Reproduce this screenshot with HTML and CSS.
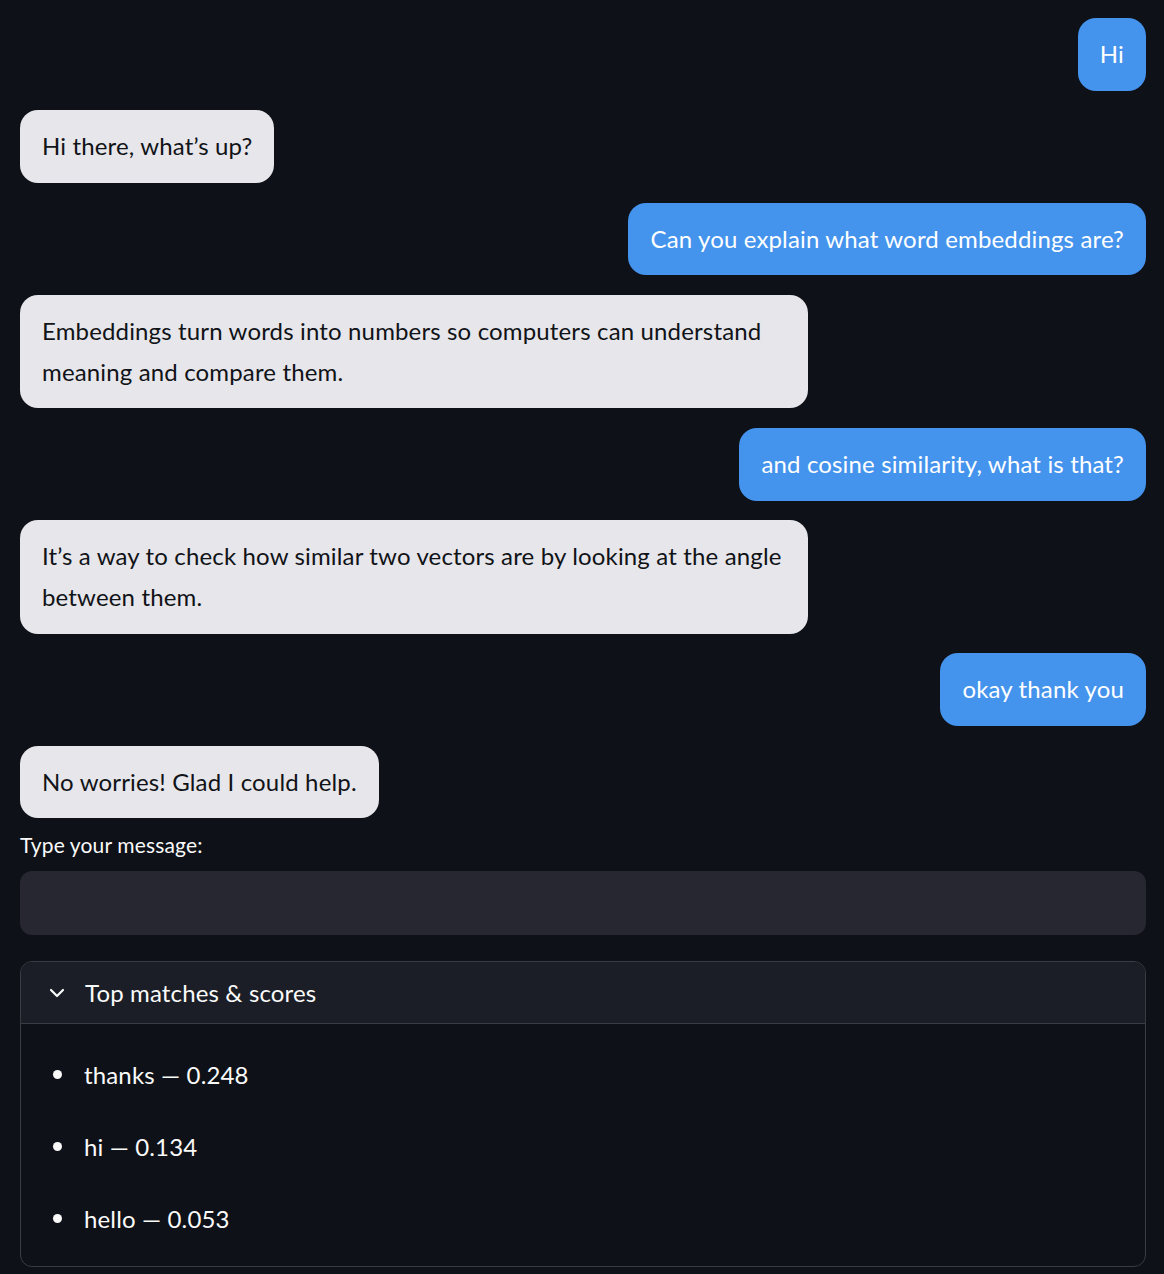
FILE: index.html
```html
<!DOCTYPE html>
<html lang="en">
<head>
<meta charset="utf-8">
<title>Chat</title>
<link rel="stylesheet" href="styles.css">
</head>
<body>
<main class="app">
  <section class="chat">
    <div class="bubble user">Hi</div>
    <div class="bubble bot">Hi there, what’s up?</div>
    <div class="bubble user">Can you explain what word embeddings are?</div>
    <div class="bubble bot">Embeddings turn words into numbers so computers can understand meaning and compare them.</div>
    <div class="bubble user">and cosine similarity, what is that?</div>
    <div class="bubble bot">It’s a way to check how similar two vectors are by looking at the angle between them.</div>
    <div class="bubble user">okay thank you</div>
    <div class="bubble bot">No worries! Glad I could help.</div>
  </section>

  <label class="label" for="msg">Type your message:</label>
  <input class="input" id="msg" type="text">

  <section class="expander">
    <div class="exp-header">
      <svg class="chev" width="16" height="10" viewBox="0 0 16 10"><path d="M2 2 L8 8 L14 2" fill="none" stroke="#fafafa" stroke-width="2.2" stroke-linecap="round" stroke-linejoin="round"/></svg>
      <span class="exp-title">Top matches &amp; scores</span>
    </div>
    <ul class="matches">
      <li>thanks — 0.248</li>
      <li>hi — 0.134</li>
      <li>hello — 0.053</li>
    </ul>
  </section>
</main>
</body>
</html>
```

FILE: styles.css
```css
html, body {
  margin: 0;
  padding: 0;
  background: #0e1117;
}

body {
  font-family: Lato, "Noto Sans", "Liberation Sans", sans-serif;
  color: #fafafa;
  letter-spacing: 0.15px;
}

.app {
  padding: 18px 18px 0 20px;
  display: flex;
  flex-direction: column;
}

.chat {
  display: flex;
  flex-direction: column;
  gap: 19.5px;
}

.bubble {
  max-width: 70%;
  box-sizing: border-box;
  padding: 16px 22px;
  font-size: 24px;
  line-height: 40.8px;
  border-radius: 18px;
}

.user {
  align-self: flex-end;
  background: #4493ed;
  color: #ffffff;
}

.bot {
  align-self: flex-start;
  background: #e6e6eb;
  color: #111317;
}

.label {
  margin-top: 12px;
  font-size: 21px;
  line-height: 30px;
  color: #fafafa;
}

.input {
  margin-top: 11px;
  height: 64px;
  box-sizing: border-box;
  border: none;
  border-radius: 12px;
  background: #262730;
  outline: none;
}

.expander {
  margin-top: 26px;
  border: 1px solid #3a3c43;
  border-radius: 12px;
  overflow: hidden;
}

.exp-header {
  height: 61px;
  background: #1b1e26;
  border-bottom: 1px solid #3a3c43;
  display: flex;
  align-items: center;
  padding-left: 28px;
}

.chev {
  display: block;
}

.exp-title {
  margin-left: 20px;
  font-size: 24px;
  color: #fafafa;
}

.matches {
  list-style: none;
  margin: 0;
  padding: 30px 0 27px 63px;
  display: flex;
  flex-direction: column;
  gap: 31px;
}

.matches li {
  position: relative;
  font-size: 24px;
  line-height: 41px;
  color: #fafafa;
}

.matches li::before {
  content: "";
  position: absolute;
  left: -31px;
  top: 16px;
  width: 9px;
  height: 9px;
  border-radius: 50%;
  background: #fafafa;
}
```
